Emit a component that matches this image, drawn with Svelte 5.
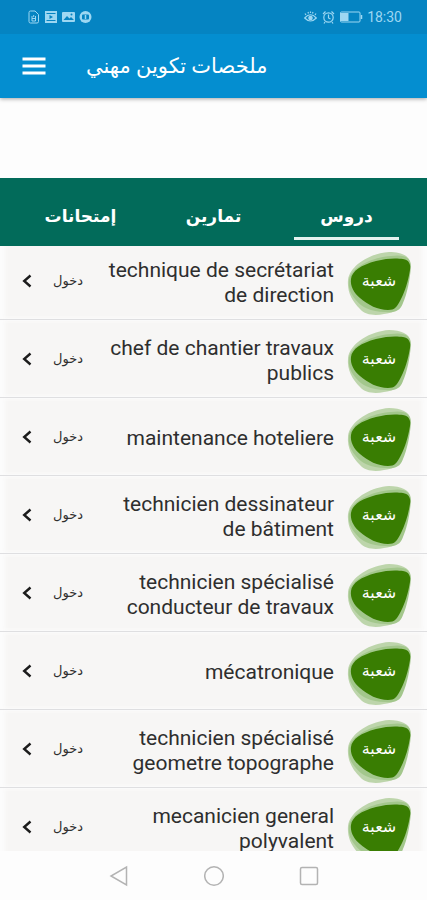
<script>
  const tabs = ['إمتحانات', 'تمارين', 'دروس'];
  let active = $state(2);

  const branches = [
    'technique de secrétariat de direction',
    'chef de chantier travaux publics',
    'maintenance hoteliere',
    'technicien dessinateur de bâtiment',
    'technicien spécialisé conducteur de travaux',
    'mécatronique',
    'technicien spécialisé geometre topographe',
    'mecanicien general polyvalent'
  ];
</script>

<div class="screen">
  <header>
    <div class="status">
      <div class="icons">
        <svg width="12" height="14" viewBox="0 0 12 14" fill="none" stroke="currentColor">
          <path d="M1 2.5Q1 1 2.5 1H7L10.5 4.5V11.5Q10.5 13 9 13H2.5Q1 13 1 11.5Z" />
          <path d="M4 6v5h3.5V6M4 8.5h3.5M5.7 5v2" />
        </svg>
        <svg width="14" height="14" viewBox="0 0 14 14">
          <path d="M1 1h12v12H1z" fill="currentColor" />
          <path d="M2.5 3.5h9M2.5 10.5h9" stroke="#0584c2" />
          <path d="M5.5 5 9 7l-3.5 2z" fill="#0584c2" />
        </svg>
        <svg width="13" height="14" viewBox="0 0 13 14">
          <rect y="2" width="13" height="10" rx="1" fill="currentColor" />
          <path d="M1.5 10 5 6l2.5 2.5L9 7l3 3z" fill="#0584c2" />
          <circle cx="9.5" cy="4.5" r="1" fill="#0584c2" />
        </svg>
        <svg width="13" height="14" viewBox="0 0 13 14">
          <circle cx="6.5" cy="7" r="6" fill="currentColor" />
          <rect x="3" y="4.5" width="7" height="5" rx="1" fill="#0584c2" />
          <path d="M6.5 5v4" stroke="currentColor" stroke-width="1.5" />
        </svg>
      </div>
      <div class="icons">
        <svg width="13" height="14" viewBox="0 0 13 14" fill="none" stroke="currentColor" stroke-width="1.2">
          <path d="M.7 8Q6.5 1.5 12.3 8Q6.5 14 .7 8ZM2 5 1 3.5M4.5 3.5 4 2M8.5 3.5 9 2M11 5l1-1.5M6.5 3V1.5" />
          <circle cx="6.5" cy="8" r="1.7" fill="currentColor" />
        </svg>
        <svg class="alarm" width="13" height="14" viewBox="0 0 13 14" fill="none" stroke="currentColor" stroke-width="1.2">
          <circle cx="6.5" cy="7.5" r="4.7" />
          <path d="M6.5 4.5V8l2 1M1 4l2.5-2.5M12 4 9.5 1.5M3 12l-1 1.5M10 12l1 1.5" />
        </svg>
        <svg width="23" height="12" viewBox="0 0 23 12">
          <rect x=".5" y="1" width="19.5" height="10" rx="1" fill="none" stroke="currentColor" />
          <path d="M1 2h7.5v8H1z" fill="currentColor" />
          <path d="M21.5 4v4" stroke="currentColor" stroke-width="1.5" />
        </svg>
        <span class="time">18:30</span>
      </div>
    </div>
    <div class="appbar">
      <button class="menu" aria-label="القائمة">
        <svg width="24" height="18" viewBox="0 0 24 18" stroke="#fff" stroke-width="3">
          <path d="M0.5 2h23M0.5 9h23M0.5 16h23" />
        </svg>
      </button>
      <h1 dir="rtl">ملخصات تكوين مهني</h1>
    </div>
  </header>

  <div class="banner"></div>

  <div class="tabs" role="tablist">
    {#each tabs as tab, i}
      <button role="tab" aria-selected={active === i} class:active={active === i} onclick={() => (active = i)}>{tab}</button>
    {/each}
  </div>

  <main>
    <ul>
      {#each branches as branch}
        <li>
          <a href="#branch">
            <svg class="chevron" width="10" height="14" viewBox="0 0 10 14" fill="none" stroke="#1c1c1c" stroke-width="2.4">
              <path d="M8.5 1.5 2.2 7l6.3 5.5" />
            </svg>
            <span class="enter" dir="rtl">دخول</span>
            <span class="name">{branch}</span>
            <span class="badge">
              <svg width="64" height="64" viewBox="0 0 64 64">
                <path fill="#bdd5ab" d="M1 28C3 13 24 1 42 0C54 0 63 4 63 11C63 24 60 38 56 48C54 58 46 61 37 62C28 64 18 63 13 57C5 49 0 40 1 28Z" />
                <path fill="#a3c78c" d="M2 28C4 15 26 5 44 4C58 2 64 6 64 14C63 28 60 42 56 51C53 60 46 61 38 60C24 60 14 55 8 47C3 41 1 35 2 28Z" />
                <path fill="#397d02" d="M4 27C5 19 14 13 29 9C40 6 50 6 56 7C62 8 64 12 63 18C61 30 58 39 54 47C50 55 48 58 41 58C31 58 21 53 13 46C7 41 3 34 4 27Z" />
              </svg>
              <span class="label" dir="rtl">شعبة</span>
            </span>
          </a>
        </li>
      {/each}
    </ul>
  </main>

  <nav>
    <button aria-label="رجوع">
      <svg width="20" height="22" viewBox="0 0 20 22"><path d="M17.5 2v18L2 11Z" /></svg>
    </button>
    <button aria-label="الرئيسية">
      <svg width="20" height="22" viewBox="0 0 20 22"><circle cx="10" cy="11" r="9.3" /></svg>
    </button>
    <button aria-label="التطبيقات">
      <svg width="20" height="22" viewBox="0 0 20 22"><rect x="1.5" y="2.5" width="17" height="17" rx="1.5" /></svg>
    </button>
  </nav>
</div>

<style>
  :global(body) {
    margin: 0;
  }
  .screen {
    display: flex;
    flex-direction: column;
    height: 100vh;
    overflow: hidden;
    background: #fdfdfd;
    font-family: Roboto, 'DejaVu Sans', sans-serif;
  }
  button {
    padding: 0;
    border: 0;
    background: none;
    color: inherit;
    font-family: inherit;
  }
  svg {
    display: block;
    flex: none;
  }
  header {
    flex: none;
    background: #048ed0;
    color: #fff;
    box-shadow: 0 1px 4px rgba(0, 0, 0, 0.35);
  }
  .status {
    display: flex;
    justify-content: space-between;
    align-items: center;
    height: 34px;
    padding: 0 25px 0 28px;
    background: #0584c2;
    color: #9dd7f2;
  }
  .icons {
    display: flex;
    align-items: center;
    gap: 4px;
  }
  .alarm {
    margin: 0 1px;
  }
  .time {
    font-size: 14px;
    line-height: 16px;
  }
  .appbar {
    display: flex;
    align-items: center;
    height: 64px;
    padding: 0 22px;
    gap: 40px;
  }
  h1 {
    margin: 0;
    font-size: 21px;
    line-height: 28px;
    font-weight: 400;
  }
  .banner {
    flex: none;
    height: 80px;
  }
  .tabs {
    flex: none;
    display: flex;
    height: 68px;
    padding: 0 14px;
    background: #026b5a;
    color: #fff;
  }
  .tabs button {
    flex: 1;
    margin: 0 14px 6px;
    padding-top: 16px;
    border-bottom: 3px solid transparent;
    font-size: 17px;
    line-height: 24px;
    font-weight: 700;
  }
  .tabs .active {
    border-color: #e4f2ef;
  }
  main {
    flex: 1;
    min-height: 0;
    overflow: hidden;
  }
  ul {
    margin: -4px 0 0;
    padding: 0;
    list-style: none;
  }
  li {
    border-bottom: 1px solid #dfdfe1;
    background: #f7f6f5;
    box-shadow: inset 5px 0 4px #fcfcfc, inset -5px 0 4px #fcfcfc;
  }
  a {
    display: flex;
    align-items: center;
    height: 77px;
    padding: 0 16px 0 22px;
    color: #2e2e2e;
    text-decoration: none;
  }
  .enter {
    flex: none;
    width: 32px;
    margin-left: 19px;
    font-size: 13px;
    line-height: 20px;
  }
  .name {
    flex: 1;
    margin: 0 13px 0 16px;
    padding-top: 4px;
    font-size: 21px;
    line-height: 25px;
    text-align: right;
  }
  .badge {
    display: grid;
    place-items: center;
    flex: none;
    padding-top: 6px;
  }
  .badge > * {
    grid-area: 1 / 1;
  }
  .label {
    padding-bottom: 6px;
    color: #fff;
    font-size: 16px;
    line-height: 20px;
  }
  nav {
    flex: none;
    display: flex;
    justify-content: center;
    gap: 75px;
    height: 49px;
  }
  nav svg {
    fill: none;
    stroke: #b3b3b3;
    stroke-width: 1.5;
  }
</style>
